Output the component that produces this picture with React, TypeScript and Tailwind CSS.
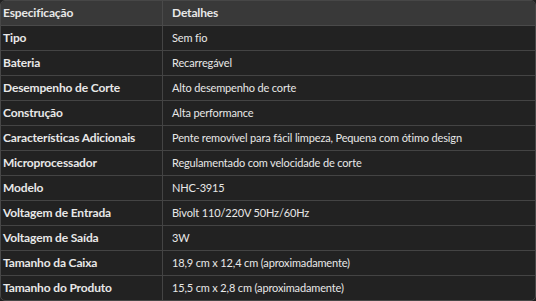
const rows: [string, string][] = [
  ["Tipo", "Sem fio"],
  ["Bateria", "Recarregável"],
  ["Desempenho de Corte", "Alto desempenho de corte"],
  ["Construção", "Alta performance"],
  ["Características Adicionais", "Pente removível para fácil limpeza, Pequena com ótimo design"],
  ["Microprocessador", "Regulamentado com velocidade de corte"],
  ["Modelo", "NHC-3915"],
  ["Voltagem de Entrada", "Bivolt 110/220V 50Hz/60Hz"],
  ["Voltagem de Saída", "3W"],
  ["Tamanho da Caixa", "18,9 cm x 12,4 cm (aproximadamente)"],
  ["Tamanho do Produto", "15,5 cm x 2,8 cm (aproximadamente)"],
];

export default function App() {
  return (
    <div
      className="w-[536px] h-[301px] bg-[#212121] text-[#e8e8e8]"
      style={{ fontFamily: 'Lato, "Noto Sans", sans-serif' }}
    >
      <div className="w-[536px] border border-[#474747] rounded-[5px] overflow-hidden bg-[#222222]">
        <div className="grid grid-cols-[162px_1fr] h-[25px] bg-[#393939] border-b border-[#4a4a4a]">
          <div className="flex items-center pl-[2px] font-bold text-[12px] tracking-[-0.15px] border-r border-[#4a4a4a]">Especificação</div>
          <div className="flex items-center pl-[9px] font-bold text-[12px] tracking-[-0.15px]">Detalhes</div>
        </div>
        {rows.map(([k, v], i) => (
          <div
            key={k}
            className={
              "grid grid-cols-[162px_1fr] " +
              (i < rows.length - 1 ? "h-[25px] border-b border-[#444444]" : "h-[24px]")
            }
          >
            <div className="flex items-center pl-[2px] font-bold text-[12px] tracking-[-0.15px] border-r border-[#444444]">{k}</div>
            <div className="flex items-center pl-[9px] text-[11px] tracking-[-0.15px]">{v}</div>
          </div>
        ))}
      </div>
    </div>
  );
}
